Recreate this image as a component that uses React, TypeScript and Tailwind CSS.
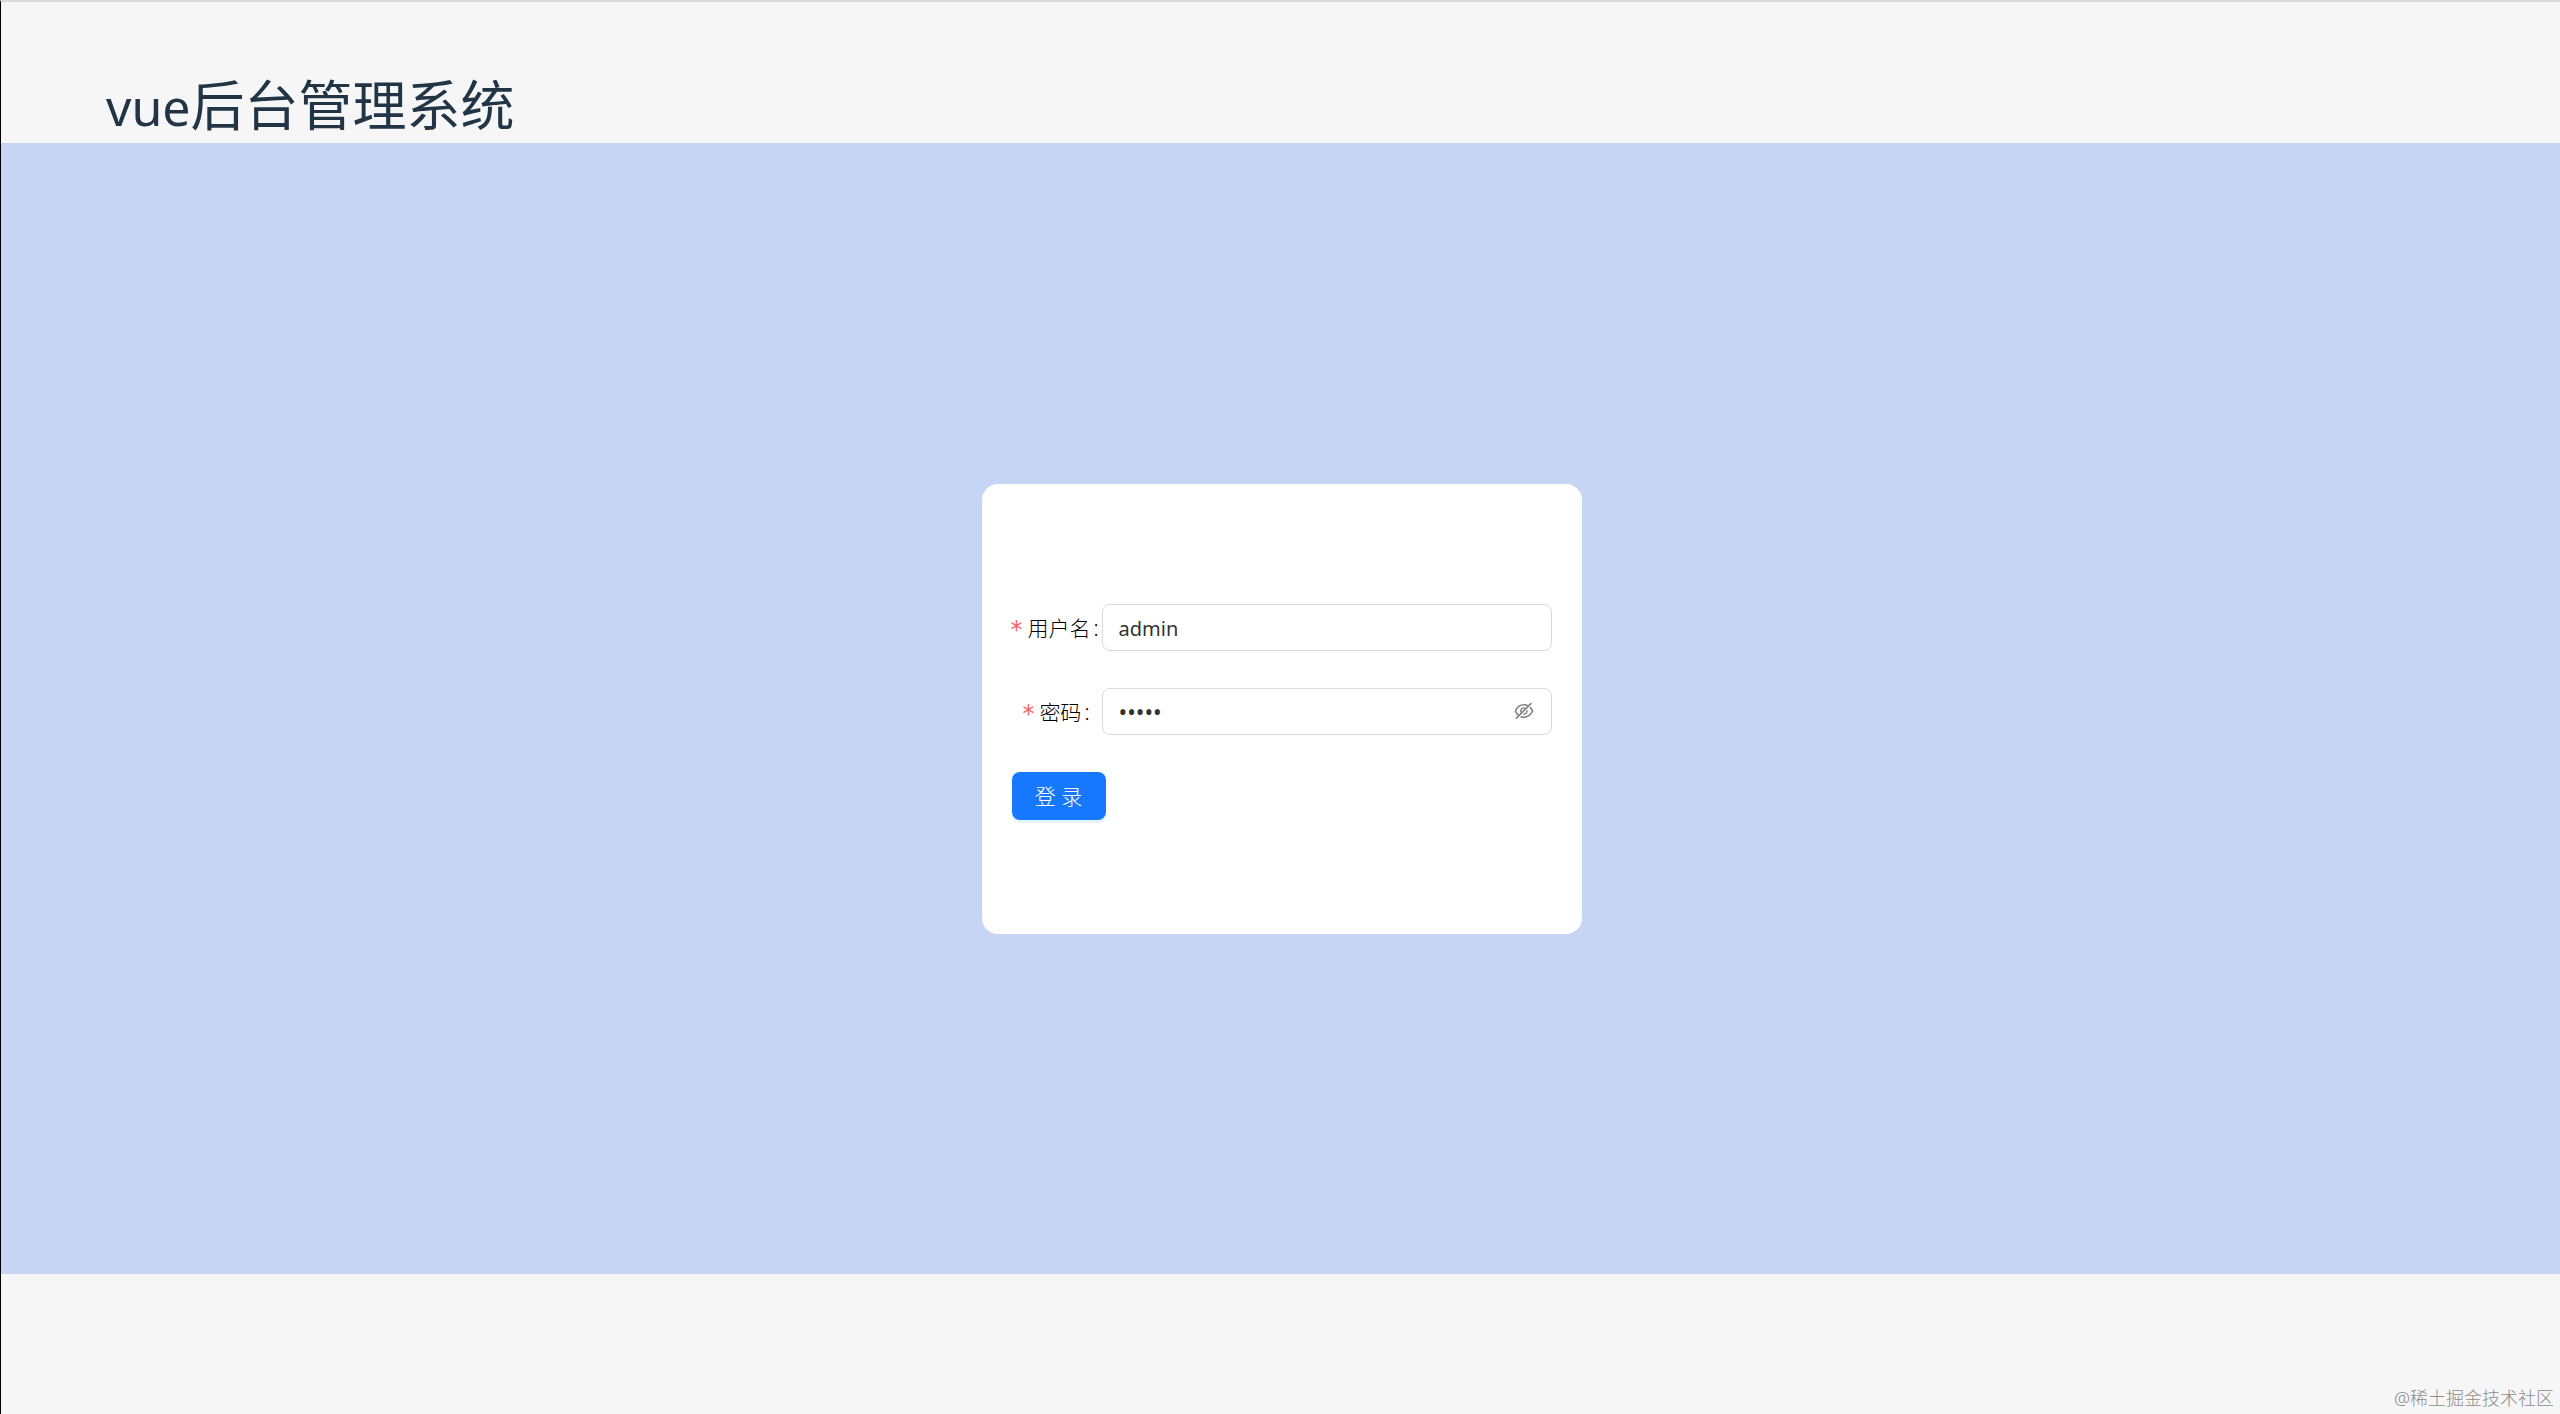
import { useState } from "react";
import type { ReactNode } from "react";
import { AiOutlineEye, AiOutlineEyeInvisible } from "react-icons/ai";

const inputClass =
  "block h-[47px] w-full rounded-lg border border-[#d9d9d9] bg-white px-4 pt-0.5 text-[#333333] outline-none focus:border-[#1677ff]";

function Field({ id, label, children }: { id: string; label: string; children: ReactNode }) {
  return (
    <div className="mb-[37px] flex items-center">
      <label
        htmlFor={id}
        className="w-[90px] shrink-0 whitespace-nowrap pt-0.5 text-right text-[21px] leading-8 font-light text-black"
      >
        <span className="mr-1.5 inline-block w-[10px] text-center align-middle font-['DejaVu_Sans_Mono',monospace] text-2xl leading-6 text-[#ff6065]">
          <span className="-mx-1">*</span>
        </span>
        {label}
        <span className="mr-3 ml-[3px]">:</span>
      </label>
      <div className="relative min-w-0 flex-1">{children}</div>
    </div>
  );
}

export default function App() {
  const [user, setUser] = useState("admin");
  const [password, setPassword] = useState("admin");
  const [visible, setVisible] = useState(false);

  return (
    <div className="flex min-h-screen flex-col border-t-2 border-l border-t-[#dadada] border-l-black bg-[#f6f6f6] font-['Noto_Sans','Noto_Sans_CJK_SC',sans-serif]">
      <header className="px-[105px] pt-[69px] pb-1">
        <h1 className="text-[54px] leading-[68px] text-[#213547]">
          <span className="text-[50px] leading-none">vue</span>后台管理系统
        </h1>
      </header>
      <main className="flex flex-1 items-center justify-center bg-[#c6d5f4] pl-0.5">
        <form
          className="flex min-h-[450px] w-[600px] flex-col rounded-2xl bg-white px-[30px] pt-[120px] pb-[30px]"
          onSubmit={(e) => e.preventDefault()}
        >
          <Field id="username" label="用户名">
            <input
              id="username"
              type="text"
              required
              className={`${inputClass} text-xl`}
              value={user}
              onChange={(e) => setUser(e.target.value)}
            />
          </Field>
          <Field id="password" label="密码">
            <input
              id="password"
              type={visible ? "text" : "password"}
              required
              className={`${inputClass} text-[23px]`}
              value={password}
              onChange={(e) => setPassword(e.target.value)}
            />
            <button
              type="button"
              aria-label="显示密码"
              className="absolute inset-y-0 right-[17px] flex items-center text-[22px] text-[#808080]"
              onClick={() => setVisible(!visible)}
            >
              {visible ? <AiOutlineEye /> : <AiOutlineEyeInvisible />}
            </button>
          </Field>
          <button
            type="submit"
            className="h-12 min-w-[94px] self-start rounded-lg bg-[#1677ff] px-[23px] text-[21px] leading-8 font-light text-white shadow-[0_3px_0_rgba(5,145,255,0.1)]"
          >
            登 录
          </button>
        </form>
      </main>
      <footer className="flex h-[140px] items-end justify-end px-1.5 pb-1 text-lg leading-6 font-light text-[#8c8c8c]">
        @稀土掘金技术社区
      </footer>
    </div>
  );
}
